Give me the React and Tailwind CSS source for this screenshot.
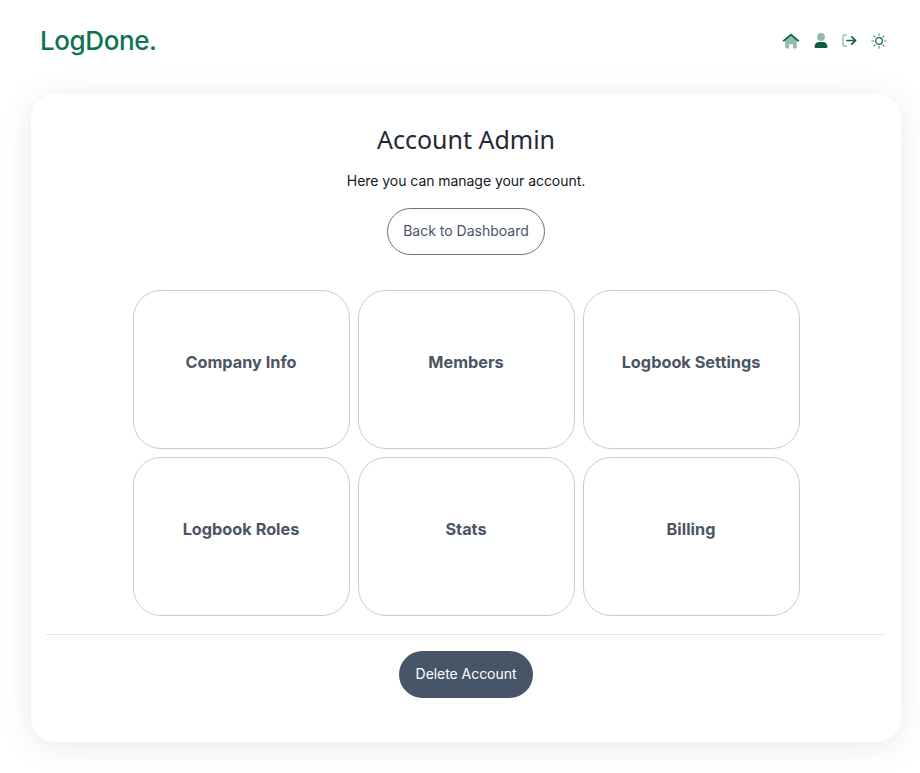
// App.jsx - account admin page

import React from "react";

const TILES = ["Company Info", "Members", "Logbook Settings", "Logbook Roles", "Stats", "Billing"];

function HomeIcon() {
  return (
    <svg width="18" height="16" viewBox="0 0 18 16" className="block">
      <path d="M3.2 7.6 9 2.9l5.8 4.7v7a1 1 0 0 1-1 1h-2.9v-4.4H7.1v4.4H4.2a1 1 0 0 1-1-1z" fill="#0f6b4f" opacity="0.45" />
      <path d="M9 .6.6 7.5l1.2 1.4L9 3l7.2 5.9 1.2-1.4z" fill="#0f6b4f" />
    </svg>
  );
}

function UserIcon() {
  return (
    <svg width="14" height="15" viewBox="0 0 14 15" className="block">
      <circle cx="7" cy="4" r="3.9" fill="#0f6b4f" opacity="0.45" />
      <path d="M5 9h4a4.4 4.4 0 0 1 4.4 4.4v.6a1 1 0 0 1-1 1H1.6a1 1 0 0 1-1-1v-.6A4.4 4.4 0 0 1 5 9z" fill="#0b5f45" />
    </svg>
  );
}

function LogoutIcon() {
  return (
    <svg width="15" height="13" viewBox="0 0 15 13" className="block" fill="none">
      <path d="M4.5 1H2.2A1.2 1.2 0 0 0 1 2.2v8.6A1.2 1.2 0 0 0 2.2 12h2.3" stroke="#0f6b4f" strokeWidth="1.4" strokeLinecap="round" opacity="0.45" />
      <path d="M5 6.5h8.6M9.8 2.8l3.8 3.7-3.8 3.7" stroke="#0b5f45" strokeWidth="1.7" strokeLinecap="round" strokeLinejoin="round" />
    </svg>
  );
}

function SunIcon() {
  return (
    <svg width="16" height="16" viewBox="0 0 16 16" className="block" fill="none">
      <circle cx="8" cy="8" r="3.3" stroke="#0b5f45" strokeWidth="1.2" />
      <path d="M8 .8v1.8M8 13.4v1.8M.8 8h1.8M13.4 8h1.8M2.9 2.9l1.3 1.3M11.8 11.8l1.3 1.3M2.9 13.1l1.3-1.3M11.8 4.2l1.3-1.3" stroke="#0f6b4f" strokeWidth="1.2" strokeLinecap="round" opacity="0.7" />
    </svg>
  );
}

export default function App() {
  return (
    <div className="h-[773px] overflow-hidden bg-white font-['Inter',sans-serif]">
      {/* header */}
      <header className="h-[81px] pl-10 pr-[33px] flex items-center justify-between">
        <span className="text-[26px] font-medium leading-none tracking-[-0.4px] text-[#0e7353]">LogDone.</span>
        <div className="flex items-center gap-[14px]">
          <HomeIcon />
          <UserIcon />
          <LogoutIcon />
          <SunIcon />
        </div>
      </header>

      {/* main card */}
      <main className="ml-[31px] mr-[19px] mt-[13px] h-[648px] rounded-3xl bg-white px-[15px] pt-[27px] shadow-[0_4px_30px_rgba(100,116,139,0.16)] flex flex-col items-center">
        <h1 className="font-['Noto_Sans',sans-serif] text-[25px] leading-9 text-[#1f2937]">Account Admin</h1>
        <p className="mt-[14px] text-sm leading-5 tracking-[-0.05px] text-[#111827]">Here you can manage your account.</p>
        <button className="mt-[17px] h-[47px] px-[15px] pb-[2px] rounded-full border border-[#64748b] text-sm text-[#475569]">
          Back to Dashboard
        </button>

        <div className="mt-[35px] grid grid-cols-[217px_217px_217px] auto-rows-[159px] gap-2">
          {TILES.map((name) => (
            <div key={name} className="rounded-[28px] border border-[#cbcbcb] pb-[14px] flex items-center justify-center text-[16.3px] font-bold text-[#4b5563]">
              {name}
            </div>
          ))}
        </div>

        <div className="mt-[18px] w-full border-t border-[#e5e7ef]" />
        <button className="mt-4 h-[47px] px-[17px] pb-[2px] rounded-full bg-[#475569] text-sm tracking-[-0.05px] text-white">Delete Account</button>
      </main>
    </div>
  );
}
